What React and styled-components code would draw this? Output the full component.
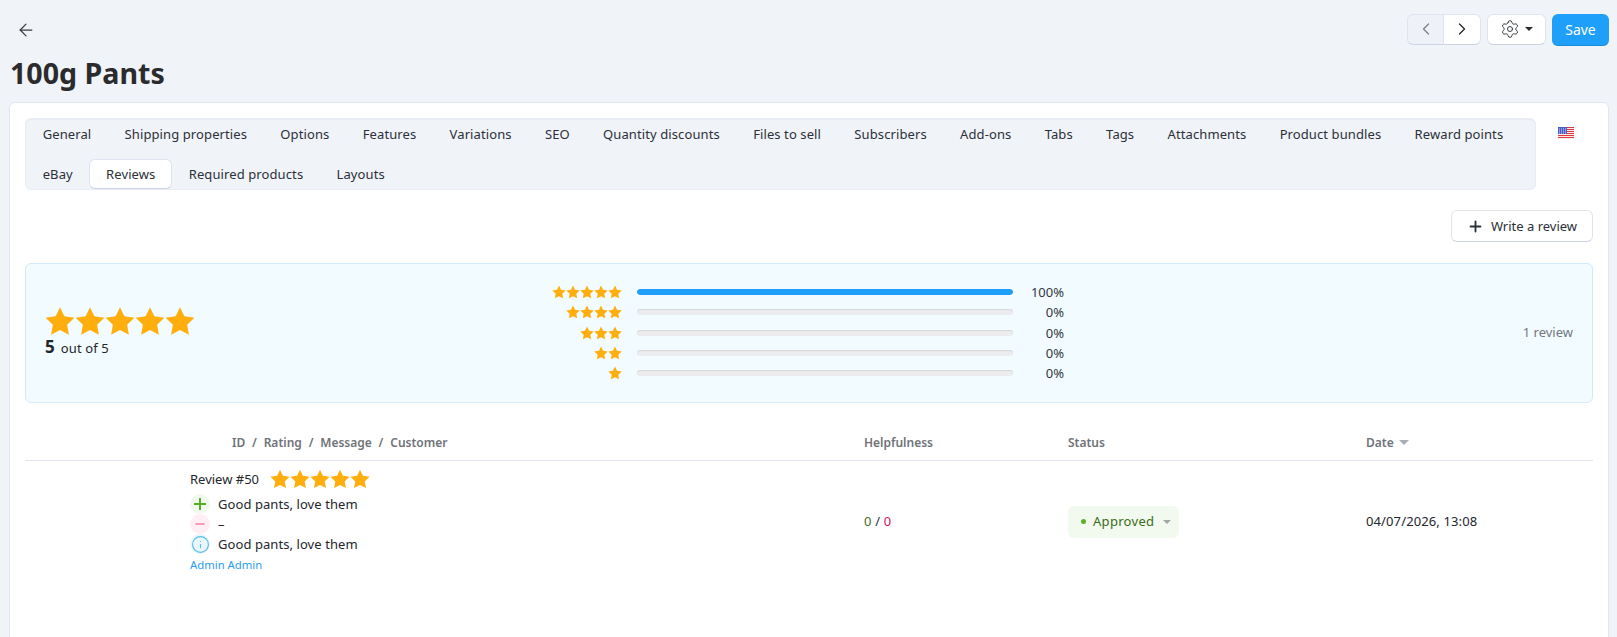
import React from 'react';
import styled, { createGlobalStyle } from 'styled-components';
import { ArrowLeft, ChevronLeft, ChevronRight, Settings, Plus, Minus, Info } from 'lucide-react';

const GlobalStyle = createGlobalStyle`
  html, body { margin: 0; padding: 0; background: #f0f3f8; }
  body {
    font-family: "Noto Sans", "Open Sans", "Liberation Sans", sans-serif;
    font-size: 13px;
    color: #24262b;
  }
`;

const Page = styled.div`
  height: 637px;
  overflow: hidden;
  padding: 14px 8px 0 9px;
  box-sizing: border-box;
`;
const TopBar = styled.div`
  display: flex;
  justify-content: space-between;
  align-items: center;
  height: 31px;
`;
const BackLink = styled.a`
  display: flex;
  margin-left: 7px;
  color: #3a3d42;
`;
const Actions = styled.div`display: flex; gap: 6px;`;
const Pager = styled.div`display: flex;`;
const PagerButton = styled.button`
  width: 37px;
  height: 31px;
  padding: 0;
  display: flex;
  align-items: center;
  justify-content: center;
  background: ${p => (p.$disabled ? '#eef1f7' : '#fff')};
  color: ${p => (p.$disabled ? '#7c8087' : '#24262b')};
  border: 1px solid #dfe4f0;
  border-bottom-color: #ccd4e5;
  border-radius: ${p => (p.$disabled ? '6px 0 0 6px' : '0 6px 6px 0')};
  border-left-width: ${p => (p.$disabled ? '1px' : '0')};
`;
const GearButton = styled.button`
  width: 59px;
  height: 31px;
  padding: 0;
  display: flex;
  align-items: center;
  justify-content: center;
  gap: 5px;
  background: #fff;
  color: #3a3d42;
  border: 1px solid #dfe4f0;
  border-bottom-color: #ccd4e5;
  border-radius: 6px;
`;
const Caret = styled.span`
  width: 0;
  height: 0;
  border-left: ${p => p.$size || 4}px solid transparent;
  border-right: ${p => p.$size || 4}px solid transparent;
  border-top: ${p => p.$size || 4}px solid ${p => p.$color || '#2b2d31'};
`;
const SaveButton = styled.button`
  width: 57px;
  height: 32px;
  padding: 0;
  background: #1e9ffa;
  color: #fff;
  border: 0;
  border-bottom: 1px solid #1a8bdc;
  border-radius: 6px;
  font: inherit;
  font-size: 14px;
`;
const Title = styled.h1`
  margin: 8px 0 10px 1px;
  font-size: 28.6px;
  line-height: 39px;
  font-weight: 700;
  color: #2b2b2e;
`;
const Card = styled.div`
  background: #fff;
  border: 1px solid #e0e5f1;
  border-radius: 6px;
  padding: 15px 15px 40px;
  height: 600px;
  box-sizing: border-box;
`;
const TabsRow = styled.div`display: flex; align-items: flex-start; justify-content: space-between;`;
const Tabs = styled.div`
  width: 1511px;
  height: 72px;
  box-sizing: border-box;
  background: #f0f3f8;
  border: 1px solid #e9ecf4;
  border-radius: 6px;
  box-shadow: inset 0 1px 1px #e6e9f0;
`;
const TabLine = styled.div`display: flex; height: 40px; &:last-child { height: 30px; }`;
const Tab = styled.a`
  display: flex;
  align-items: center;
  height: 30px;
  padding: 0 16.67px;
  border-radius: 6px;
  color: #2c3038;
  letter-spacing: 0.1px;
  ${p => p.$active && `
    background: #fff;
    border: 1px solid #dfe4f0;
    border-bottom-color: #ccd4e5;
    padding: 0 15.67px;
    box-sizing: border-box;
  `}
`;
const Flag = styled.svg`margin: 9px 19px 0 0;`;
const Toolbar = styled.div`display: flex; justify-content: flex-end; margin-top: 20px;`;
const WriteButton = styled.button`
  display: flex;
  align-items: center;
  justify-content: center;
  gap: 7px;
  width: 142px;
  height: 32px;
  padding: 0;
  background: #fff;
  border: 1px solid #dfe4f0;
  border-bottom-color: #ccd4e5;
  border-radius: 6px;
  font: inherit;
  color: #2c3038;
`;
const RatingPanel = styled.div`
  display: grid;
  grid-template-columns: 506px auto 1fr;
  align-items: center;
  height: 140px;
  margin-top: 21px;
  padding: 0 19px 3px 19px;
  box-sizing: border-box;
  background: #f2fbff;
  border: 1px solid #d2ebfb;
  border-radius: 6px;
`;
const Summary = styled.div`display: flex; flex-direction: column; margin-top: 1px;`;
const StarRow = styled.div`display: flex; gap: ${p => p.$gap || 0}px; justify-content: ${p => (p.$end ? 'flex-end' : 'flex-start')};`;
const Score = styled.div`font-size: 13px; line-height: 22px; letter-spacing: 0.1px;`;
const ScoreValue = styled.b`font-size: 17px; margin-right: 6px;`;
const Bars = styled.div`display: flex; flex-direction: column; gap: 4.2px;`;
const BarRow = styled.div`
  display: grid;
  grid-template-columns: 71px 376px 37px;
  column-gap: 14.5px;
  align-items: center;
  height: 16px;
`;
const Track = styled.div`
  height: 6px;
  border-radius: 3px;
  background: #ececee;
  box-shadow: inset 0 1px 1px #d8d8da;
  overflow: hidden;
`;
const Fill = styled.div`height: 100%; background: #1e9ffa; border-radius: 3px;`;
const Percent = styled.span`text-align: right; color: #33373d;`;
const ReviewCount = styled.div`text-align: right; color: #73777e;`;
const TableHead = styled.div`
  display: grid;
  grid-template-columns: 839px 204px 298px 1fr;
  align-items: center;
  height: 35px;
  margin-top: 18px;
  padding-top: 4px;
  border-bottom: 1px solid #e3e5ec;
  font-weight: 600;
  font-size: 12px;
  color: #6f7379;
`;
const HeadCell = styled.div`
  display: flex;
  align-items: center;
  gap: 5px;
  padding-left: ${p => p.$indent || 0}px;
  word-spacing: ${p => (p.$spaced ? '3.7px' : '0')};
`;
const TableRow = styled.div`
  display: grid;
  grid-template-columns: 165px 674px 204px 298px 1fr;
  align-items: center;
  padding-top: 7px;
`;
const ReviewCell = styled.div`display: flex; flex-direction: column;`;
const ReviewTitle = styled.div`display: flex; align-items: center; gap: 11px; height: 22px; margin-bottom: 4px;`;
const MessageLine = styled.div`display: flex; align-items: center; gap: 8px; height: 20px; letter-spacing: 0.07px;`;
const MessageIcon = styled.span`
  width: 20px;
  height: 20px;
  border-radius: 50%;
  display: flex;
  align-items: center;
  justify-content: center;
  background: ${p => p.$bg};
  color: ${p => p.$color};
`;
const Customer = styled.a`color: #2a9cf5; font-size: 11.3px; line-height: 21px;`;
const Helpful = styled.div`color: #4a6a1e; margin-top: -2px; word-spacing: 0.4px;`;
const Slash = styled.span`color: #2c3038;`;
const Unhelpful = styled.span`color: #d6115f;`;
const StatusPill = styled.div`
  display: flex;
  align-items: center;
  width: 111px;
  height: 32px;
  padding: 0 0 2px 13px;
  box-sizing: border-box;
  background: #f2f9ee;
  border-radius: 6px;
  color: #3a6d18;
  letter-spacing: 0.3px;
`;
const StatusDot = styled.span`
  width: 5px;
  height: 5px;
  border-radius: 50%;
  background: #5cb02c;
  margin: 2px 7px 0 0;
`;
const StatusCaret = styled.span`margin: 2px 0 0 9px; display: flex;`;
const DateCell = styled.div`margin-top: -2px; letter-spacing: 0.12px;`;

const Star = ({ size }) => (
  <svg width={size} height={size} viewBox="0 0 24 24" fill="#ffae0e">
    <path d="M12 .9l3.5 7.3 8 1.1-5.8 5.6 1.4 8L12 19.1 4.9 22.9l1.4-8L.5 9.3l8-1.1z" />
  </svg>
);

const Stars = ({ count, size, gap, end }) => (
  <StarRow $gap={gap} $end={end}>
    {Array.from({ length: count }, (_, i) => <Star key={i} size={size} />)}
  </StarRow>
);

const UsFlag = () => (
  <Flag width="16" height="12" viewBox="0 0 16 12">
    <rect width="16" height="12" fill="#fbeaea" />
    {[0, 2, 4, 6, 8, 10].map(y => <rect key={y} y={y} width="16" height="1" fill="#e0393e" />)}
    <rect width="9" height="7" fill="#4a5fc4" />
    {[1, 3, 5, 7].map(x => [1.5, 3.5, 5.5].map(y => <rect key={`${x}-${y}`} x={x} y={y} width="1" height="1" fill="#c9d2f5" />))}
  </Flag>
);

const tabRows = [
  ['General', 'Shipping properties', 'Options', 'Features', 'Variations', 'SEO', 'Quantity discounts', 'Files to sell', 'Subscribers', 'Add-ons', 'Tabs', 'Tags', 'Attachments', 'Product bundles', 'Reward points'],
  ['eBay', 'Reviews', 'Required products', 'Layouts'],
];

const ratings = [
  { stars: 5, percent: 100 },
  { stars: 4, percent: 0 },
  { stars: 3, percent: 0 },
  { stars: 2, percent: 0 },
  { stars: 1, percent: 0 },
];

const App = () => (
  <Page>
    <GlobalStyle />
    <TopBar>
      <BackLink><ArrowLeft size={20} strokeWidth={1.5} /></BackLink>
      <Actions>
        <Pager>
          <PagerButton $disabled><ChevronLeft size={20} strokeWidth={1.5} /></PagerButton>
          <PagerButton><ChevronRight size={20} strokeWidth={1.5} /></PagerButton>
        </Pager>
        <GearButton><Settings size={20} strokeWidth={1.2} /><Caret /></GearButton>
        <SaveButton>Save</SaveButton>
      </Actions>
    </TopBar>
    <Title>100g Pants</Title>
    <Card>
      <TabsRow>
        <Tabs>
          {tabRows.map(row => (
            <TabLine key={row[0]}>
              {row.map(name => <Tab key={name} $active={name === 'Reviews'}>{name}</Tab>)}
            </TabLine>
          ))}
        </Tabs>
        <UsFlag />
      </TabsRow>
      <Toolbar>
        <WriteButton><Plus size={17} strokeWidth={2.6} />Write a review</WriteButton>
      </Toolbar>
      <RatingPanel>
        <Summary>
          <Stars count={5} size={30} />
          <Score><ScoreValue>5</ScoreValue>out of 5</Score>
        </Summary>
        <Bars>
          {ratings.map(r => (
            <BarRow key={r.stars}>
              <Stars count={r.stars} size={14} end />
              <Track><Fill style={{ width: `${r.percent}%` }} /></Track>
              <Percent>{r.percent}%</Percent>
            </BarRow>
          ))}
        </Bars>
        <ReviewCount>1 review</ReviewCount>
      </RatingPanel>
      <TableHead>
        <HeadCell $indent={207} $spaced>ID / Rating / Message / Customer</HeadCell>
        <HeadCell>Helpfulness</HeadCell>
        <HeadCell>Status</HeadCell>
        <HeadCell>Date<Caret $size={5} $color="#a9adb3" /></HeadCell>
      </TableHead>
      <TableRow>
        <div />
        <ReviewCell>
          <ReviewTitle>Review #50<Stars count={5} size={20} /></ReviewTitle>
          <MessageLine>
            <MessageIcon $bg="#f1f8ee" $color="#52b022"><Plus size={18} strokeWidth={2.6} /></MessageIcon>
            Good pants, love them
          </MessageLine>
          <MessageLine>
            <MessageIcon $bg="#ffeef4" $color="#f47fa8"><Minus size={14} strokeWidth={2.6} /></MessageIcon>
            –
          </MessageLine>
          <MessageLine>
            <MessageIcon $bg="#e9f7fd" $color="#55bde6"><Info size={19} strokeWidth={1.4} /></MessageIcon>
            Good pants, love them
          </MessageLine>
          <Customer>Admin Admin</Customer>
        </ReviewCell>
        <Helpful>0 <Slash>/</Slash> <Unhelpful>0</Unhelpful></Helpful>
        <StatusPill>
          <StatusDot />Approved
          <StatusCaret><Caret $color="#a3a7a1" /></StatusCaret>
        </StatusPill>
        <DateCell>04/07/2026, 13:08</DateCell>
      </TableRow>
    </Card>
  </Page>
);

export default App;
